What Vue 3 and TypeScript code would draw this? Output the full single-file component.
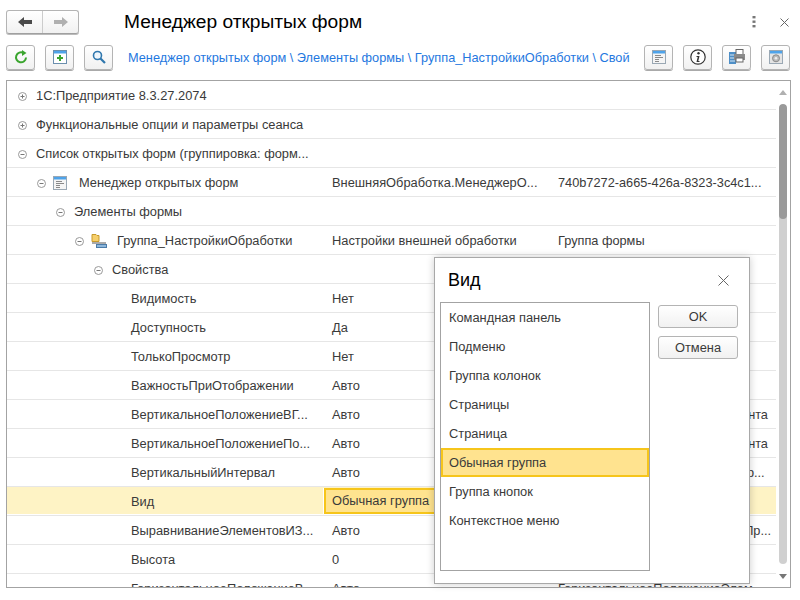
<script setup lang="ts">
interface Row {
  name: string
  indent: number
  toggle?: 'plus' | 'minus'
  icon?: 'form' | 'group'
  value?: string
  extra?: string
  selected?: boolean
}

const rows: Row[] = [
  { name: '1С:Предприятие 8.3.27.2074', indent: 0, toggle: 'plus' },
  { name: 'Функциональные опции и параметры сеанса', indent: 0, toggle: 'plus' },
  { name: 'Список открытых форм (группировка: форм...', indent: 0, toggle: 'minus' },
  {
    name: 'Менеджер открытых форм',
    indent: 1,
    toggle: 'minus',
    icon: 'form',
    value: 'ВнешняяОбработка.МенеджерО...',
    extra: '740b7272-a665-426a-8323-3c4c1...'
  },
  { name: 'Элементы формы', indent: 2, toggle: 'minus' },
  {
    name: 'Группа_НастройкиОбработки',
    indent: 3,
    toggle: 'minus',
    icon: 'group',
    value: 'Настройки внешней обработки',
    extra: 'Группа формы'
  },
  { name: 'Свойства', indent: 4, toggle: 'minus' },
  { name: 'Видимость', indent: 5, value: 'Нет' },
  { name: 'Доступность', indent: 5, value: 'Да' },
  { name: 'ТолькоПросмотр', indent: 5, value: 'Нет' },
  { name: 'ВажностьПриОтображении', indent: 5, value: 'Авто' },
  { name: 'ВертикальноеПоложениеВГ...', indent: 5, value: 'Авто', extra: 'ВертикальноеПоложениеЭлемента' },
  { name: 'ВертикальноеПоложениеПо...', indent: 5, value: 'Авто', extra: 'ВертикальноеПоложениеЭлемента' },
  { name: 'ВертикальныйИнтервал', indent: 5, value: 'Авто', extra: 'ИнтервалМеждуЭлементамиФор...' },
  { name: 'Вид', indent: 5, value: 'Обычная группа', selected: true },
  { name: 'ВыравниваниеЭлементовИЗ...', indent: 5, value: 'Авто', extra: 'ВыравниваниеЭлементовФормПр...' },
  { name: 'Высота', indent: 5, value: '0' },
  { name: 'ГоризонтальноеПоложениеВ...', indent: 5, value: 'Авто', extra: 'ГоризонтальноеПоложениеЭлем' }
]

const choices = [
  'Командная панель',
  'Подменю',
  'Группа колонок',
  'Страницы',
  'Страница',
  'Обычная группа',
  'Группа кнопок',
  'Контекстное меню'
]
</script>

<template>
  <div class="page">
    <header class="head">
      <div class="nav">
        <button class="nav-btn">
          <svg width="14" height="10" viewBox="0 0 14 10"><path d="M0 5 6 0v3h8v4H6v3z" fill="#4a4a4a" /></svg>
        </button>
        <button class="nav-btn">
          <svg width="14" height="10" viewBox="0 0 14 10"><path d="M14 5 8 0v3H0v4h8v3z" fill="#b0b0b0" /></svg>
        </button>
      </div>
      <h1 class="title">Менеджер открытых форм</h1>
      <div class="head-tools">
        <svg width="4" height="12" viewBox="0 0 4 12"><g fill="#777"><rect x="0.5" width="3" height="2.4" /><rect x="0.5" y="4.5" width="3" height="2.4" /><rect x="0.5" y="9" width="3" height="2.4" /></g></svg>
        <svg width="9" height="9" viewBox="0 0 9 9"><path d="M.5.5l8 8M8.500.5l-8 8" stroke="#666" fill="none" /></svg>
      </div>
    </header>

    <div class="bar">
      <button class="tool">
        <svg width="14" height="14" viewBox="0 0 14 14"><path d="M12 7.500A5 5 0 1 1 9.500 3" stroke="#3aa52e" stroke-width="2" fill="none" /><path d="M8 0v6l4.500-3z" fill="#3aa52e" /></svg>
      </button>
      <button class="tool">
        <svg width="14" height="14" viewBox="0 0 14 14"><rect x=".5" y=".5" width="13" height="13" fill="#fff" stroke="#6b8fae" /><rect x="1" y="1" width="12" height="2.500" fill="#4ea3ea" /><path d="M6 5h2v2h2v2H8v2H6V9H4V7h2z" fill="#3aa52e" /></svg>
      </button>
      <button class="tool">
        <svg width="14" height="14" viewBox="0 0 14 14"><circle cx="5.500" cy="5.500" r="4" fill="#eef5fb" stroke="#2f77ad" stroke-width="1.600" /><path d="m8.500 8.500 4.500 4.500" stroke="#2f77ad" stroke-width="2.200" /></svg>
      </button>
      <a class="crumbs">Менеджер открытых форм \ Элементы формы \ Группа_НастройкиОбработки \ Свой</a>
      <button class="tool">
        <svg width="14" height="14" viewBox="0 0 14 14"><rect x=".5" y=".5" width="13" height="13" fill="#f5f5f5" stroke="#9aa8b4" /><rect x="1" y="1" width="12" height="2.500" fill="#4ea3ea" /><path d="M3 5.500h6M3 7.500h8M3 9.500h4M3 11.500h4" stroke="#8a8a8a" /></svg>
      </button>
      <button class="tool">
        <svg width="16" height="16" viewBox="0 0 16 16"><circle cx="8" cy="8" r="7.200" fill="#fff" stroke="#333" stroke-width="1.200" /><circle cx="8.500" cy="4.300" r="1.200" fill="#333" /><path d="M6.500 7h3l-1.200 5h1.200v1H6.500l1.200-5H6.500z" fill="#333" /></svg>
      </button>
      <button class="tool">
        <svg width="16" height="16" viewBox="0 0 16 16"><rect x="0" y="3" width="7" height="12" fill="#4e8fc7" /><path d="M1 6h5M1 9h5M1 12h5" stroke="#d7e7f4" /><rect x="7" y="0.500" width="7" height="5" fill="#fff" stroke="#666" /><rect x="5" y="5" width="11" height="6" fill="#8a8a8a" /><rect x="7" y="9" width="7" height="4" fill="#fff" stroke="#666" /></svg>
      </button>
      <button class="tool">
        <svg width="14" height="14" viewBox="0 0 14 14"><rect x=".5" y=".5" width="13" height="13" fill="#e4e4e4" stroke="#9aa8b4" /><rect x="1" y="1" width="12" height="2.500" fill="#4ea3ea" /><circle cx="7" cy="8.300" r="3.500" fill="#bbb" stroke="#8a8a8a" /><circle cx="7" cy="8.300" r="1.300" fill="#eee" /></svg>
      </button>
    </div>

    <section class="grid">
      <div class="rows">
        <div v-for="row in rows" :key="row.name" class="row" :class="{ selected: row.selected }">
          <div class="col-name" :class="'lvl-' + row.indent">
            <svg v-if="row.toggle" class="toggle" width="9" height="9" viewBox="0 0 9 9">
              <circle cx="4.500" cy="4.500" r="4" fill="#fff" stroke="#999" />
              <path d="M2.500 4.500h4" stroke="#777" />
              <path v-if="row.toggle === 'plus'" d="M4.500 2.500v4" stroke="#777" />
            </svg>
            <svg v-if="row.icon === 'form'" class="row-icon" width="14" height="14" viewBox="0 0 14 14">
              <rect x=".5" y=".5" width="13" height="13" fill="#f5f5f5" stroke="#9aa8b4" />
              <rect x="1" y="1" width="12" height="2.500" fill="#4ea3ea" />
              <path d="M3 5.500h6M3 7.500h8M3 9.500h4M3 11.500h4" stroke="#8a8a8a" />
            </svg>
            <svg v-if="row.icon === 'group'" class="row-icon group" width="16" height="14" viewBox="0 0 16 14">
              <path d="M1 .5h4l1 1h2v6H1z" fill="#f6cf6a" stroke="#c79a2c" />
              <path d="M1 9h14" stroke="#555" />
              <rect x="5.500" y="10.500" width="10" height="3" fill="#8db7dc" stroke="#4b7ba8" />
            </svg>
            <span class="name">{{ row.name }}</span>
          </div>
          <div class="col-value"><span v-if="row.selected" class="current">{{ row.value }}</span><template v-else>{{ row.value }}</template></div>
          <div class="col-extra">{{ row.extra }}</div>
        </div>
      </div>
      <div class="scroll">
        <span class="arrow up"></span>
        <span class="track"><span class="thumb"></span></span>
        <span class="arrow down"></span>
      </div>
    </section>

    <div class="dialog">
      <div class="dialog-head">
        <span class="dialog-title">Вид</span>
        <svg width="11" height="11" viewBox="0 0 11 11"><path d="M.5.5l10 10M10.500.5l-10 10" stroke="#666" fill="none" /></svg>
      </div>
      <div class="dialog-body">
        <ul class="list">
          <li v-for="c in choices" :key="c" :class="{ active: c === 'Обычная группа' }">{{ c }}</li>
        </ul>
        <div class="actions">
          <button class="btn">OK</button>
          <button class="btn">Отмена</button>
        </div>
      </div>
    </div>
  </div>
</template>

<style>
html, body {
  margin: 0;
  background: #fff;
}
</style>

<style scoped>
.page {
  position: relative;
  width: 800px;
  height: 600px;
  overflow: hidden;
  background: #fff;
  font-family: Arial, "Liberation Sans", sans-serif;
  font-size: 12.85px;
  color: #3a3a3a;
  box-sizing: border-box;
  padding: 10px 9px 0 6px;
}

button {
  font-family: inherit;
  padding: 0;
  cursor: pointer;
}

.head {
  display: flex;
  align-items: center;
  height: 24px;
}

.nav {
  display: flex;
  width: 73px;
  height: 24px;
  border: 1px solid #b4b4b4;
  border-bottom-color: #a0a0a0;
  border-radius: 3px;
  box-sizing: border-box;
  background: linear-gradient(#fff, #f1f1f1);
  box-shadow: 0 1px 0 #bbb;
}

.nav-btn {
  flex: 1;
  border: 0;
  background: none;
  display: flex;
  align-items: center;
  justify-content: center;
}

.nav-btn + .nav-btn {
  border-left: 1px solid #ccc;
}

.title {
  margin: 0 0 0 45px;
  font-size: 19.2px;
  font-weight: 400;
  color: #000;
  line-height: 24px;
}

.head-tools {
  margin-left: auto;
  display: flex;
  align-items: center;
  gap: 24px;
  padding-right: 2px;
}

.bar {
  display: flex;
  align-items: center;
  margin-top: 10px;
  height: 26px;
}

.tool {
  width: 29px;
  height: 25px;
  flex: none;
  border: 1px solid #b4b4b4;
  border-radius: 3px;
  background: linear-gradient(#fff, #f1f1f1);
  box-shadow: 0 1px 0 #aaa;
  display: flex;
  align-items: center;
  justify-content: center;
  margin-right: 10px;
}

.tool:last-child {
  margin-right: 1px;
}

.crumbs {
  flex: 1;
  margin-left: 5px;
  color: #1f78e0;
  font-size: 12.75px;
  white-space: nowrap;
}

.grid {
  display: flex;
  margin-top: 10px;
  height: 508px;
  border: 1px solid #a3a3a3;
  box-sizing: border-box;
  overflow: hidden;
}

.rows {
  flex: 1;
  min-width: 0;
}

.row {
  display: flex;
  height: 29px;
  box-sizing: border-box;
  padding-top: 2px;
  border-bottom: 1px solid #e6e6e6;
  align-items: center;
  line-height: 26px;
}

.row.selected {
  background: #fef3c5;
  box-shadow: inset 0 -1px 0 #fff;
}

.col-name {
  width: 319px;
  flex: none;
  display: flex;
  align-items: center;
  box-sizing: border-box;
  white-space: nowrap;
}

.lvl-0 { padding-left: 11px; }
.lvl-1 { padding-left: 30px; }
.lvl-2 { padding-left: 49px; }
.lvl-3 { padding-left: 68px; }
.lvl-4 { padding-left: 87px; }
.lvl-5 { padding-left: 124px; }

.toggle {
  margin-right: 9px;
  flex: none;
}

.row-icon {
  flex: none;
  margin-right: 12px;
  margin-left: -2px;
}

.row-icon.group {
  margin-right: 10px;
}

.col-value {
  width: 226px;
  flex: none;
  box-sizing: border-box;
  padding-left: 6px;
  white-space: nowrap;
  height: 26px;
}

.current {
  display: block;
  margin: -1px 0 0 -8px;
  padding-left: 6px;
  height: 26px;
  line-height: 22px;
  background: #ffe38f;
  border: 2px solid #f6c51b;
  box-sizing: border-box;
  box-shadow: -1px 0 0 #fff;
}

.col-extra {
  flex: 1;
  font-size: 12.75px;
  white-space: nowrap;
  overflow: hidden;
  padding-left: 6px;
}

.scroll {
  width: 14px;
  flex: none;
  display: flex;
  flex-direction: column;
  align-items: center;
}

.arrow {
  width: 0;
  height: 0;
  border-left: 4px solid transparent;
  border-right: 4px solid transparent;
}

.arrow.up {
  border-bottom: 5px solid #b0b0b0;
  margin: 9px 0;
}

.arrow.down {
  border-top: 5px solid #777;
  margin: 10px 0 8px;
}

.track {
  flex: 1;
  width: 8px;
  background: #d0d0d0;
  border-radius: 4px;
  overflow: hidden;
}

.thumb {
  display: block;
  width: 8px;
  height: 115px;
  background: #9a9a9a;
  border-radius: 4px;
}

.dialog {
  position: absolute;
  left: 434px;
  top: 257px;
  width: 316px;
  height: 327px;
  box-sizing: border-box;
  border: 1px solid #a8a8a8;
  background: #fff;
  box-shadow: 0 0 8px rgba(0, 0, 0, 0.2);
  padding: 0 5px;
}

.dialog-head {
  display: flex;
  align-items: center;
  justify-content: space-between;
  height: 44px;
  padding: 0 15px 0 8px;
}

.dialog-title {
  font-size: 18px;
  color: #000;
}

.dialog-body {
  display: flex;
  gap: 8px;
}

.list {
  list-style: none;
  margin: 0;
  padding: 0;
  width: 210px;
  height: 269px;
  box-sizing: border-box;
  border: 1px solid #a3a3a3;
}

.list li {
  height: 29px;
  line-height: 29px;
  padding-left: 8px;
}

.list li.active {
  background: #ffe38f;
  border: 2px solid #f6c51b;
  padding-left: 6px;
  line-height: 25px;
  box-sizing: border-box;
}

.actions {
  display: flex;
  flex-direction: column;
  gap: 8px;
  margin-top: 3px;
}

.btn {
  width: 80px;
  height: 23px;
  border: 1px solid #b4b4b4;
  border-radius: 3px;
  background: linear-gradient(#fff, #f1f1f1);
  color: #3a3a3a;
  font-size: 12.85px;
}
</style>
